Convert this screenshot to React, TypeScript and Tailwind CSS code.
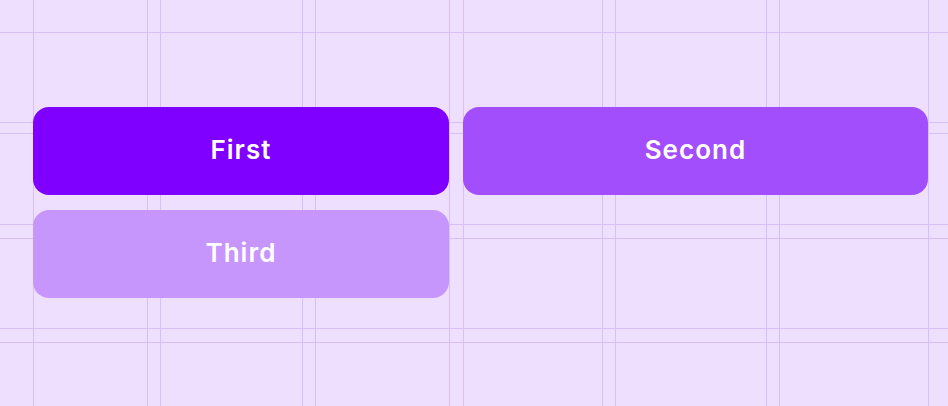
import React from "react";

const vLines = [33, 147, 160, 302, 315, 449, 463, 602, 615, 766, 779, 928];
const hLines = [32, 122, 133, 224, 238, 328, 342];

const buttons = [
    { label: "First", className: "bg-[#7f00ff]" },
    { label: "Second", className: "bg-[#a34efc]" },
    { label: "Third", className: "bg-[#c796fc]" },
];

export default function App() {
    return (
        <div className="relative min-h-[406px] w-full overflow-hidden bg-[#efdfff] font-['Inter',sans-serif]">
            {/* layout guides in the background */}
            <svg className="pointer-events-none absolute inset-0 h-full w-full" width="948" height="406">
                {vLines.map((x) => (
                    <line key={`v${x}`} x1={x + 0.5} y1={0} x2={x + 0.5} y2={406} stroke="#d8c0f7" strokeWidth={1} />
                ))}
                {hLines.map((y) => (
                    <line key={`h${y}`} x1={0} y1={y + 0.5} x2={948} y2={y + 0.5} stroke="#d8c0f7" strokeWidth={1} />
                ))}
            </svg>

            <div className="relative grid grid-cols-[416px_465px] gap-x-[14px] gap-y-[15px] pl-[33px] pt-[107px]">
                {buttons.map((b) => (
                    <button
                        key={b.label}
                        className={`flex h-[88px] items-center justify-center rounded-[16px] pb-[3px] text-[26px] font-semibold tracking-[0.04em] text-white ${b.className}`}
                    >
                        {b.label}
                    </button>
                ))}
            </div>
        </div>
    );
}
